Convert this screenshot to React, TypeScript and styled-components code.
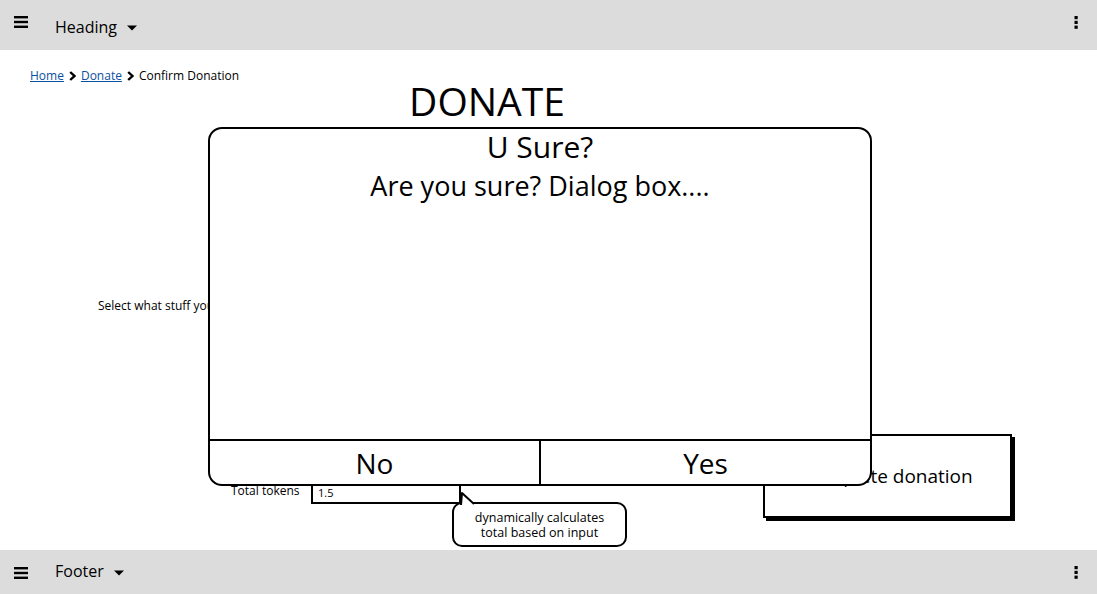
import React, { FC } from 'react';
import styled, { createGlobalStyle } from 'styled-components';

const GlobalStyle = createGlobalStyle`
    html, body {
        margin: 0;
        padding: 0;
        background: #fff;
        font-family: "Open Sans", "Liberation Sans", sans-serif;
        color: #000;
    }
    #root {
        height: 594px;
    }
`;

const Hamburger: FC = () => (
    <svg width="14" height="12" viewBox="0 0 14 12">
        <rect x="0" y="0" width="14" height="2.4" fill="#000" />
        <rect x="0" y="4.8" width="14" height="2.4" fill="#000" />
        <rect x="0" y="9.6" width="14" height="2.4" fill="#000" />
    </svg>
);

const Kebab: FC = () => (
    <svg width="4" height="13" viewBox="0 0 4 13">
        <rect x="0.5" y="0" width="3.2" height="3.2" fill="#000" />
        <rect x="0.5" y="4.8" width="3.2" height="3.2" fill="#000" />
        <rect x="0.5" y="9.6" width="3.2" height="3.2" fill="#000" />
    </svg>
);

const Caret: FC = () => (
    <svg width="10" height="6" viewBox="0 0 10 6">
        <path d="M0 0.5 L10 0.5 L5 5.5 Z" fill="#000" />
    </svg>
);

const Chevron: FC = () => (
    <svg width="7" height="10" viewBox="0 0 7 10">
        <path d="M1.2 1 L5.4 5 L1.2 9" stroke="#000" strokeWidth="2.4" fill="none" />
    </svg>
);

const App: FC = () => {
    return (
        <Page>
            <GlobalStyle />
            <Bar>
                <MenuIcon><Hamburger /></MenuIcon>
                <BarTitle>Heading</BarTitle>
                <CaretBox><Caret /></CaretBox>
                <KebabBox><Kebab /></KebabBox>
            </Bar>

            <Main>
                <Breadcrumb>
                    <Crumb href="#">Home</Crumb>
                    <Chevron />
                    <Crumb href="#">Donate</Crumb>
                    <Chevron />
                    <span>Confirm Donation</span>
                </Breadcrumb>

                <PageTitle>DONATE</PageTitle>

                <SelectText>Select what stuff you want to donate</SelectText>

                <FormRow>
                    <TokensGroup>
                        <SmallLabel>Total tokens</SmallLabel>
                        <TokenInput>
                            1.5
                            <Callout>
                                <Tail width="22" height="14" viewBox="0 0 22 14">
                                    <path d="M1 13 L2 1 L14 12" stroke="#000" strokeWidth="2" fill="#fff" strokeLinejoin="round" />
                                </Tail>
                                dynamically calculates<br />total based on input
                            </Callout>
                        </TokenInput>
                    </TokensGroup>
                    <CompleteButton>Complete donation</CompleteButton>
                </FormRow>

                <Dialog>
                    <DialogBody>
                        <DialogTitle>U Sure?</DialogTitle>
                        <DialogText>Are you sure? Dialog box....</DialogText>
                    </DialogBody>
                    <DialogActions>
                        <ActionButton>No</ActionButton>
                        <ActionButton divider>Yes</ActionButton>
                    </DialogActions>
                </Dialog>
            </Main>

            <Bar footer>
                <MenuIcon footer><Hamburger /></MenuIcon>
                <BarTitle footer>Footer</BarTitle>
                <CaretBox footer><Caret /></CaretBox>
                <KebabBox footer><Kebab /></KebabBox>
            </Bar>
        </Page>
    );
};

const Page = styled.div`
    height: 594px;
    display: flex;
    flex-direction: column;
    overflow: hidden;
`;

const Bar = styled.div<{ footer?: boolean }>`
    height: ${p => (p.footer ? '44px' : '50px')};
    flex-shrink: 0;
    background: #dcdcdc;
    display: flex;
    align-items: center;
    padding-left: 14px;
    box-sizing: border-box;
`;

const MenuIcon = styled.div<{ footer?: boolean }>`
    display: flex;
    width: 14px;
    margin-top: ${p => (p.footer ? '1px' : '-6px')};
`;

const BarTitle = styled.div<{ footer?: boolean }>`
    margin-left: 27px;
    font-size: 16px;
    line-height: 20px;
    margin-top: ${p => (p.footer ? '-2px' : '4px')};
`;

const CaretBox = styled.div<{ footer?: boolean }>`
    display: flex;
    margin-left: 10px;
    margin-top: ${p => (p.footer ? '2px' : '6px')};
`;

const KebabBox = styled.div<{ footer?: boolean }>`
    display: flex;
    margin-left: auto;
    margin-right: 19px;
    margin-top: ${p => (p.footer ? '0' : '-6px')};
`;

const Main = styled.div`
    flex: 1;
    position: relative;
    display: flex;
    flex-direction: column;
`;

const Breadcrumb = styled.div`
    display: flex;
    align-items: center;
    gap: 5px;
    margin: 18px 0 0 30px;
    font-size: 12px;
    line-height: 16px;
`;

const Crumb = styled.a`
    color: #0a50a0;
    text-decoration: underline;
`;

const PageTitle = styled.h1`
    margin: -5px 0 0 0;
    width: 974px;
    text-align: center;
    font-size: 39px;
    font-weight: 400;
    line-height: 44px;
`;

const SelectText = styled.div`
    margin: 175px 0 0 98px;
    font-size: 12px;
    line-height: 16px;
`;

const FormRow = styled.div`
    display: flex;
    align-items: flex-start;
    margin-top: 120px;
`;

const TokensGroup = styled.div`
    display: flex;
    align-items: flex-start;
    margin: 47px 0 0 231px;
`;

const SmallLabel = styled.div`
    font-size: 12px;
    line-height: 16px;
    margin-top: 2px;
    width: 80px;
`;

const TokenInput = styled.div`
    position: relative;
    width: 141px;
    height: 19px;
    border: 2px solid #000;
    padding-left: 5px;
    font-size: 11px;
    line-height: 19px;
`;

const Callout = styled.div`
    position: absolute;
    left: 139px;
    top: 19px;
    width: 175px;
    height: 45px;
    border: 2px solid #000;
    border-radius: 10px;
    background: #fff;
    box-sizing: border-box;
    font-size: 12.5px;
    line-height: 15px;
    text-align: center;
    padding-top: 6px;
`;

const Tail = styled.svg`
    position: absolute;
    left: 6px;
    top: -12px;
`;

const CompleteButton = styled.div`
    margin-left: 302px;
    width: 249px;
    height: 84px;
    border: 2px solid #000;
    box-sizing: border-box;
    box-shadow: 3px 3px 0 #000;
    display: flex;
    align-items: center;
    justify-content: center;
    font-size: 19px;
`;

const Dialog = styled.div`
    position: absolute;
    left: 208px;
    top: 77px;
    width: 664px;
    height: 359px;
    box-sizing: border-box;
    border: 2px solid #000;
    border-radius: 14px;
    background: #fff;
    display: flex;
    flex-direction: column;
    overflow: hidden;
`;

const DialogBody = styled.div`
    flex: 1;
    display: flex;
    flex-direction: column;
    align-items: center;
`;

const DialogTitle = styled.div`
    margin-top: 0px;
    font-size: 30px;
    line-height: 36px;
`;

const DialogText = styled.div`
    margin-top: 4px;
    font-size: 27px;
    line-height: 34px;
`;

const DialogActions = styled.div`
    height: 43px;
    border-top: 2px solid #000;
    display: flex;
`;

const ActionButton = styled.div<{ divider?: boolean }>`
    flex: 1;
    display: flex;
    align-items: center;
    justify-content: center;
    font-size: 28px;
    border-left: ${p => (p.divider ? '2px solid #000' : 'none')};
`;

export default App;
